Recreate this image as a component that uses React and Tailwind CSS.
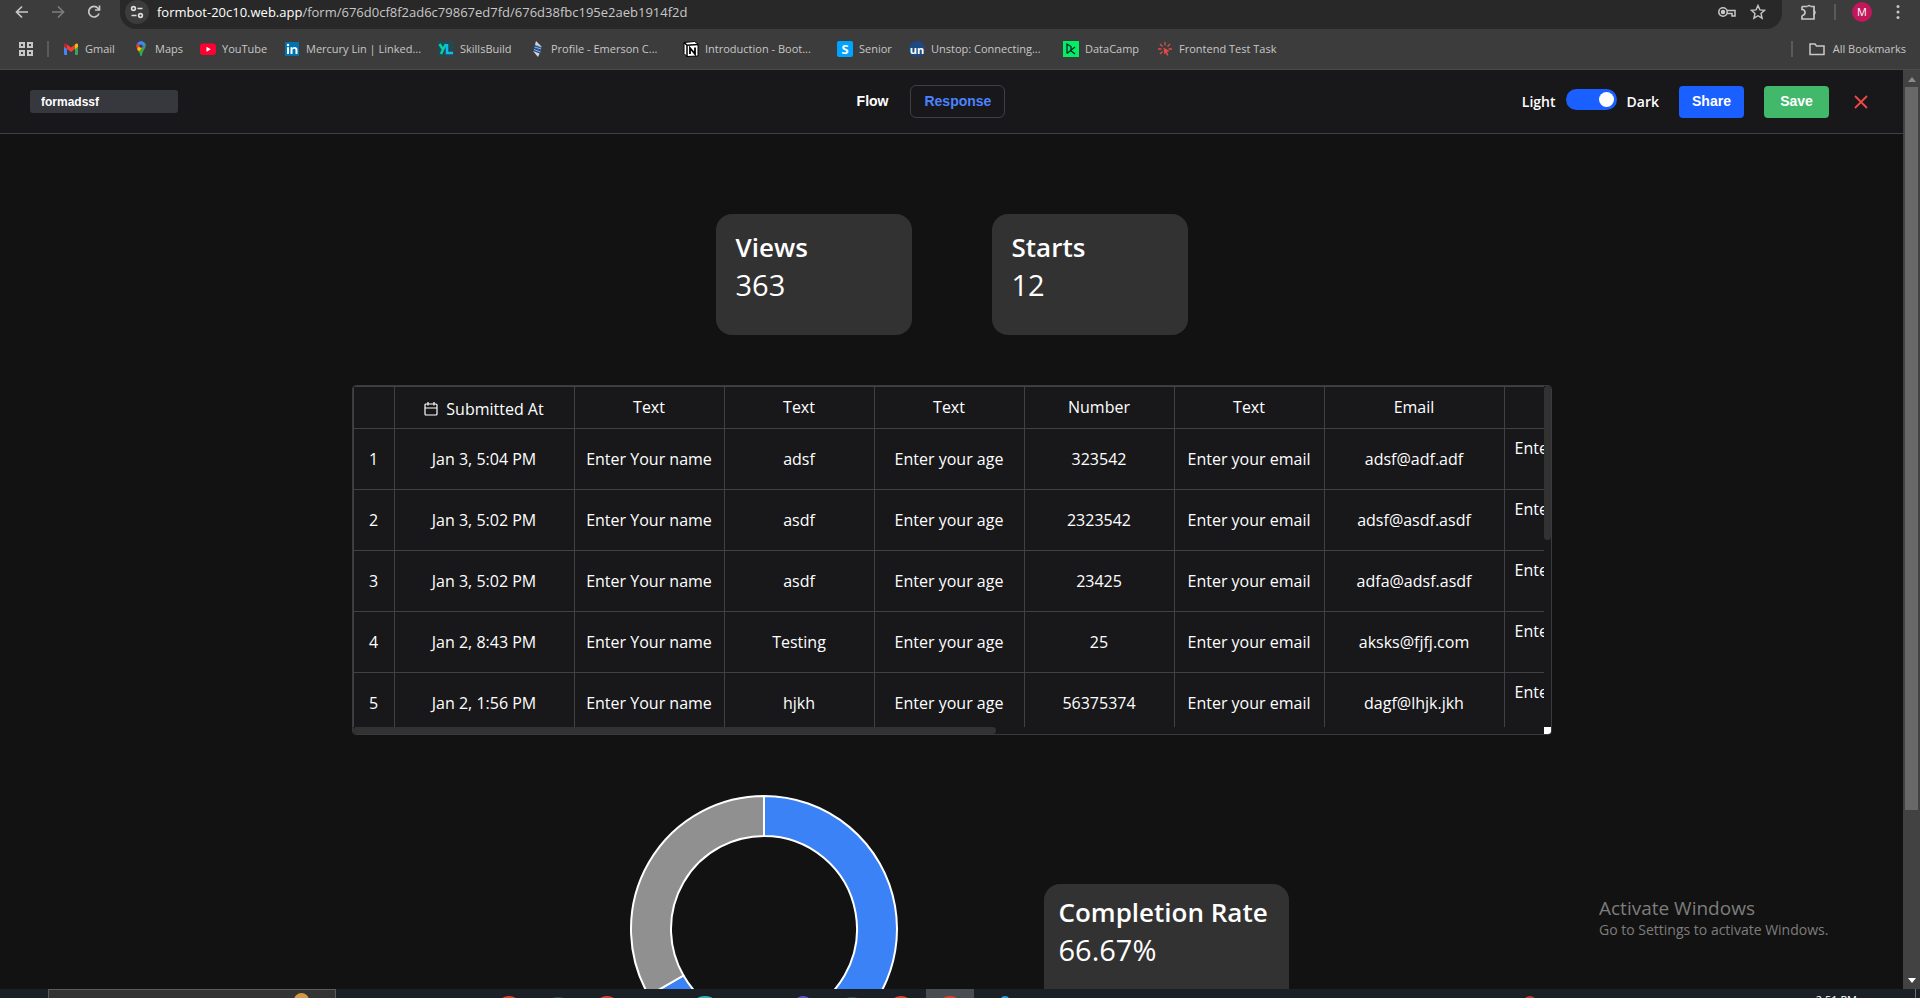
import { useState } from 'react';
import { FaYoutube } from 'react-icons/fa';

const bookmarks = [
  { name: 'Gmail', icon: 'gmail', w: 'w-[70px]' },
  { name: 'Maps', icon: 'maps', w: 'w-[67px]' },
  { name: 'YouTube', icon: 'youtube', w: 'w-[84px]' },
  { name: 'Mercury Lin | Linked...', icon: 'linkedin', w: 'w-[154px]' },
  { name: 'SkillsBuild', icon: 'skills', w: 'w-[91px]' },
  { name: 'Profile - Emerson C...', icon: 'profile', w: 'w-[154px]' },
  { name: 'Introduction - Boot...', icon: 'notion', w: 'w-[154px]' },
  { name: 'Senior', icon: 'senior', w: 'w-[72px]' },
  { name: 'Unstop: Connecting...', icon: 'unstop', w: 'w-[154px]' },
  { name: 'DataCamp', icon: 'datacamp', w: 'w-[94px]' },
  { name: 'Frontend Test Task', icon: 'frontend', w: 'w-[140px]' },
];

const columns = ['Text', 'Text', 'Text', 'Number', 'Text', 'Email'];

const rows = [
  ['Jan 3, 5:04 PM', 'adsf', '323542', 'adsf@adf.adf'],
  ['Jan 3, 5:02 PM', 'asdf', '2323542', 'adsf@asdf.asdf'],
  ['Jan 3, 5:02 PM', 'asdf', '23425', 'adfa@adsf.asdf'],
  ['Jan 2, 8:43 PM', 'Testing', '25', 'aksks@fjfj.com'],
  ['Jan 2, 1:56 PM', 'hjkh', '56375374', 'dagf@lhjk.jkh'],
];

function BookmarkIcon({ icon }) {
  switch (icon) {
    case 'gmail':
      return (
        <svg viewBox="0 0 16 16" className="size-4 shrink-0">
          <path d="M1 3.5h3V14H2a1 1 0 0 1-1-1z" fill="#4285f4" />
          <path d="M12 3.5h3V13a1 1 0 0 1-1 1h-2z" fill="#34a853" />
          <path d="M4 8V3.5L8 6.6l4-3.1V8l-4 3z" fill="#ea4335" />
          <path d="M1 4c0-1.8 1.8-2 3-.5V8L1 5.7z" fill="#c5221f" />
          <path d="M15 4c0-1.8-1.8-2-3-.5V8l3-2.3z" fill="#fbbc04" />
        </svg>
      );
    case 'maps':
      return (
        <svg viewBox="0 0 16 20" className="h-4 w-4 shrink-0">
          <path d="M3 3.5A6 6 0 0 1 10 .6L6.200 5z" fill="#1a73e8" />
          <path d="M3 3.5C5 .5 8 0 10 .6c2 .6 3.400 2 3.900 4L10 8.5 6.200 5z" fill="#4285f4" />
          <path d="M3 3.5 6.200 5.500 4 11C1.700 8 1.600 5.500 3 3.500z" fill="#ea4335" />
          <path d="M10 8.200 5.500 13.500 3 10 6.200 6z" fill="#fbbc04" />
          <path d="M13.900 4.500c.5 3.500-1.500 5.500-3.300 8.500-1.300 2.500-1.100 6-2.600 6s-1-3-2.500-5.500z" fill="#34a853" />
          <circle cx="8" cy="6.500" r="2" fill="#3c3c3c" />
        </svg>
      );
    case 'youtube':
      return (
        <svg viewBox="0 0 16 16" className="size-4 shrink-0">
          <rect x="0" y="2.500" width="16" height="11.500" rx="3" fill="#ff0033" />
          <path d="M6.500 5.800v5l4.300-2.500z" fill="#fff" />
        </svg>
      );
    case 'linkedin':
      return (
        <svg viewBox="0 0 16 16" className="size-4 shrink-0">
          <path d="M1 1h14v14H1z" fill="#0073b1" />
          <path d="M3 6.300h2V13H3zM6.500 6.300h2V13h-2zM8.500 8.500c.5-.9 3-1.200 3 .7V13h2V9c0-3.500-4-3.500-5-1.700z" fill="#fff" />
          <circle cx="4" cy="4" r="1.200" fill="#fff" />
        </svg>
      );
    case 'skills':
      return (
        <svg viewBox="0 0 16 16" className="size-4 shrink-0">
          <path d="M0 0h16v16H0z" fill="#24484d" />
          <path d="M1.500 3 5 8.500 8 3M5 8.500 3 13" fill="none" stroke="#00d3a9" strokeWidth="2.500" />
          <path d="M9 3v9h6" fill="none" stroke="#14b8f0" strokeWidth="2.500" />
        </svg>
      );
    case 'profile':
      return (
        <svg viewBox="0 0 16 16" className="size-4 shrink-0">
          <path d="m7 .5 6 5.500-3 9.500-6-6z" fill="#2b4f86" />
          <path d="M7 0 6 4l7 2zM4 10l5 6 1.500-3.500z" fill="#d5d7da" />
          <path d="M5.500 6 12 8M5 8.500l6.500 2.500M7 4l5 2" stroke="#8fb2dd" strokeWidth="1" />
        </svg>
      );
    case 'notion':
      return (
        <svg viewBox="0 0 16 16" className="size-4 shrink-0">
          <path d="M1 1.500 11.500.500 15 3v12L4 15.500l-3-3z" fill="#fff" stroke="#000" />
          <path d="M1 1.500 4 4.300 15 3.500M4 4.300V16" fill="none" stroke="#000" strokeWidth="1.500" />
          <path d="M7 13V7l5 6V6.500" fill="none" stroke="#000" strokeWidth="1.800" />
        </svg>
      );
    case 'senior':
      return (
        <span className="flex size-4 shrink-0 items-center justify-center rounded-xs bg-[#00a3ff] text-[13px] leading-none font-bold text-white">
          S
        </span>
      );
    case 'unstop':
      return (
        <span className="flex size-4 shrink-0 items-center justify-center rounded-full bg-[#1c4980] text-[11px] leading-none font-bold text-white">
          un
        </span>
      );
    case 'datacamp':
      return (
        <svg viewBox="0 0 16 16" className="size-4 shrink-0">
          <path d="M0 0h16v16H0z" fill="#03ef62" />
          <path d="M4 12.500V3l4 2.500v3.800L4 12.500M12 6 7.500 9.500l4.500 3.500" fill="none" stroke="#05192d" strokeWidth="1.200" />
        </svg>
      );
    default:
      return (
        <svg viewBox="0 0 16 16" className="size-4 shrink-0">
          <path d="M8 1v3.500M3 3l2.500 2.500M13 3l-2.500 2.500M1 8h3.500M11.500 8H15M3 13l2.500-2.500" stroke="#dd4b4b" strokeWidth="1.300" />
          <path d="m6.500 6.500 6 3.500-2.500 1 1.500 3-1.500.800L8.800 12 7.300 13.500z" fill="#dd4b4b" />
        </svg>
      );
  }
}

function BrowserBar() {
  return (
    <div className="h-[70px] shrink-0 overflow-hidden border-b border-[#4a4a4a] bg-[#3c3c3c] text-[#c7c7c7]">
      <div className="flex h-[29px] items-start">
        <div className="flex h-6 w-[120px] shrink-0 items-center gap-5 pl-[14px]">
          <button aria-label="Back">
            <svg viewBox="0 0 16 16" className="size-4" fill="none" stroke="#c7c7c7" strokeWidth="1.700">
              <path d="M14 8H3M8 2.500 2.500 8 8 13.500" />
            </svg>
          </button>
          <button aria-label="Forward">
            <svg viewBox="0 0 16 16" className="size-4" fill="none" stroke="#7d7d7d" strokeWidth="1.700">
              <path d="M2 8h11M8 2.500 13.500 8 8 13.500" />
            </svg>
          </button>
          <button aria-label="Reload">
            <svg viewBox="0 0 16 16" className="size-4" fill="none" stroke="#c7c7c7" strokeWidth="1.700">
              <path d="M13 9.500A5.300 5.300 0 1 1 12 4.200L13.500 6" />
              <path d="M13.500 1.500V6H9" />
            </svg>
          </button>
        </div>
        <div className="flex h-[29px] min-w-0 flex-1 items-start justify-between rounded-b-[16px] bg-[#282828] pr-4 pl-[5px]">
          <div className="flex h-6 items-center">
            <button aria-label="Site information" className="flex size-6 items-center justify-center rounded-full bg-[#3c3c3c]">
              <svg viewBox="0 0 16 16" className="size-4" fill="none" stroke="#dedede" strokeWidth="1.600">
                <circle cx="4.500" cy="4.500" r="1.900" />
                <path d="M8.500 4.500h5M2.500 11.500h5" />
                <circle cx="11.500" cy="11.500" r="1.900" />
              </svg>
            </button>
            <p className="ml-2 text-[13px] leading-5 whitespace-nowrap text-[#c7c7c7]">
              <span className="text-white">formbot-20c10.web.app</span>/form/676d0cf8f2ad6c79867ed7fd/676d38fbc195e2aeb1914f2d
            </p>
          </div>
          <div className="flex h-6 items-center gap-[14px]">
            <svg viewBox="0 0 18 12" className="h-3 w-[18px]" fill="none" stroke="#c7c7c7" strokeWidth="1.500">
              <circle cx="5" cy="6" r="4.200" />
              <circle cx="5" cy="6" r="1.500" fill="#c7c7c7" />
              <path d="M9 4.500h8V10h-3V7.500H9" />
            </svg>
            <svg viewBox="0 0 16 16" className="size-4" fill="none" stroke="#c7c7c7" strokeWidth="1.400">
              <path d="m8 1.500 1.900 4.400 4.700.4L11 9.500l1.100 4.700L8 11.700l-4.100 2.500L5 9.500 1.400 6.300l4.700-.4z" />
            </svg>
          </div>
        </div>
        <div className="flex h-6 w-[138px] shrink-0 items-center pl-[18px]">
          <svg viewBox="0 0 18 18" className="size-[18px]" fill="none" stroke="#c7c7c7" strokeWidth="1.700">
            <path d="M2 3.500h5.500M10.500 3.500H14V8M14 11v5H2v-3.500M2 3.500v3a2.500 2.500 0 0 1 0 6" />
            <path d="M7 3.500a2 1.800 0 0 1 4 0zM14 7.500a1.800 2 0 0 1 0 4z" fill="#c7c7c7" stroke="none" />
            <path d="M14 7v5" />
          </svg>
          <span className="ml-4 h-4 w-[2px] bg-[#5a5a5a]" />
          <span className="ml-4 flex size-5 items-center justify-center rounded-full bg-[#c2185b] text-[11px] text-white">M</span>
          <svg viewBox="0 0 4 16" className="ml-6 h-4 w-1" fill="#c7c7c7">
            <circle cx="2" cy="2.500" r="1.500" />
            <circle cx="2" cy="8" r="1.500" />
            <circle cx="2" cy="13.500" r="1.500" />
          </svg>
        </div>
      </div>
      <div className="flex h-10 items-center pr-[14px] pl-[19px] text-[11px]">
        <svg viewBox="0 0 14 14" className="size-[14px] shrink-0" fill="none" stroke="#c7c7c7" strokeWidth="2">
          <path d="M1 1h4v4H1zM9 1h4v4H9zM1 9h4v4H1zM9 9h4v4H9z" />
        </svg>
        <span className="mx-[14px] h-4 w-[2px] bg-[#5a5a5a]" />
        <nav className="flex flex-1">
          {bookmarks.map((b) => (
            <a href="#" key={b.name} className={`${b.w} flex h-5 shrink-0 items-center gap-[6px] whitespace-nowrap`}>
              <BookmarkIcon icon={b.icon} />
              {b.name}
            </a>
          ))}
        </nav>
        <span className="mr-4 h-4 w-[2px] bg-[#5a5a5a]" />
        <a href="#" className="flex items-center gap-2 whitespace-nowrap">
          <svg viewBox="0 0 16 14" className="h-[14px] w-4" fill="none" stroke="#c7c7c7" strokeWidth="1.500">
            <path d="M1 12V2h5l1.500 2H15v8.500H1z" />
          </svg>
          All Bookmarks
        </a>
      </div>
    </div>
  );
}

function Header({ dark, setDark }) {
  const [formName, setFormName] = useState('formadssf');

  return (
    <header className="grid h-16 shrink-0 grid-cols-3 items-center border-b border-[#3f3f46] bg-[#18181b] pr-[35px] pl-[30px] text-white">
      <div className="flex">
        <input
          aria-label="Form name"
          value={formName}
          onChange={(e) => setFormName(e.target.value)}
          className="h-[23px] w-[148px] rounded-[3px] bg-[#37373e] px-[11px] font-['Liberation_Sans',Arial,sans-serif] text-[12px] font-bold"
        />
      </div>
      <div className="flex items-center justify-center gap-[22px] pr-9 font-['Liberation_Sans',Arial,sans-serif] text-[14px] font-bold">
        <button>Flow</button>
        <button className="h-[33px] rounded-md border border-[#3f3f46] px-[13px] text-[#4b83ff]">Response</button>
      </div>
      <div className="flex items-center justify-end gap-5">
        <div className="flex items-center gap-[10px] text-[14px] font-semibold">
          <span>Light</span>
          <label className="mb-1 flex h-[21px] w-[51px] cursor-pointer items-center justify-end rounded-full bg-[#1a5fff] px-[3px]">
            <input type="checkbox" aria-label="Dark mode" className="sr-only" checked={dark} onChange={(e) => setDark(e.target.checked)} />
            <span className="size-[15px] rounded-full bg-white" />
          </label>
          <span>Dark</span>
        </div>
        <button className="h-8 w-[65px] rounded-sm bg-[#1a5fff] font-['Liberation_Sans',Arial,sans-serif] text-[14px] font-bold">Share</button>
        <button className="h-8 w-[65px] rounded-sm bg-[#42b86b] font-['Liberation_Sans',Arial,sans-serif] text-[14px] font-bold">Save</button>
        <button aria-label="Close" className="ml-[5px]">
          <svg viewBox="0 0 14 14" className="size-[14px]" stroke="#f04848" strokeWidth="1.800" fill="none">
            <path d="m1 1 12 12M13 1 1 13" />
          </svg>
        </button>
      </div>
    </header>
  );
}

function StatCard({ title, value, className }) {
  return (
    <div className={`${className} h-[121px] rounded-2xl bg-[#323232] text-white`}>
      <h3 className="text-[26px] leading-[38px] font-semibold whitespace-nowrap">{title}</h3>
      <p className="text-[29px] leading-[38px]">{value}</p>
    </div>
  );
}

function ResponseTable() {
  return (
    <div className="mt-[50px] grid h-[350px] w-full max-w-[1200px] shrink-0 grid-cols-[minmax(0,1fr)_7px] grid-rows-[minmax(0,1fr)_7px] overflow-hidden rounded-sm border border-[#3a3a3c] bg-[#18181b] text-white">
      <div className="overflow-hidden">
        <table className="w-[1352px] table-fixed border-collapse text-center text-[16px]">
          <colgroup>
            <col className="w-[41px]" />
            <col className="w-[180px]" />
            <col className="w-[150px]" />
            <col className="w-[150px]" />
            <col className="w-[150px]" />
            <col className="w-[150px]" />
            <col className="w-[150px]" />
            <col className="w-[180px]" />
            <col className="w-[201px]" />
          </colgroup>
          <thead>
            <tr className="h-[42px] *:border *:border-[#414144] *:pb-[2px] *:font-medium">
              <th></th>
              <th>
                <span className="flex items-center justify-center gap-2 pt-1">
                  <svg viewBox="0 0 14 14" className="size-[14px]" fill="none" stroke="#fff" strokeWidth="1.200">
                    <rect x="1" y="2" width="12" height="11" rx="1" />
                    <path d="M1 6h12M4 0v3.500M10 0v3.500" />
                  </svg>
                  Submitted At
                </span>
              </th>
              {columns.map((c, i) => (
                <th key={i}>{c}</th>
              ))}
              <th></th>
            </tr>
          </thead>
          <tbody>
            {rows.map(([date, name, age, email], i) => (
              <tr key={i} className="h-[61px] *:border *:border-[#414144]">
                <td>{i + 1}</td>
                <td>{date}</td>
                <td>Enter Your name</td>
                <td>{name}</td>
                <td>Enter your age</td>
                <td>{age}</td>
                <td>Enter your email</td>
                <td>{email}</td>
                <td className="px-[10px] pb-[22px] text-left whitespace-nowrap">Enter your</td>
              </tr>
            ))}
          </tbody>
        </table>
      </div>
      <div>
        <div className="h-[154px] rounded-full bg-[#323232]" />
      </div>
      <div>
        <div className="h-full w-[54%] rounded-full bg-[#323232]" />
      </div>
      <div className="bg-white" />
    </div>
  );
}

function Donut() {
  return (
    <svg viewBox="0 0 270 270" className="size-[270px] shrink-0" stroke="#fff" strokeWidth="2">
      <path d="M135 2A133 133 0 1 1 19.820 201.500L54.460 181.500A93 93 0 1 0 135 42z" fill="#3b82f6" />
      <path d="M135 2A133 133 0 0 0 19.820 201.500L54.460 181.500A93 93 0 0 1 135 42z" fill="#909090" />
    </svg>
  );
}

function PageScrollbar() {
  return (
    <div className="flex w-[17px] shrink-0 flex-col items-center bg-[#424242] py-[6px]">
      <svg viewBox="0 0 8 5" className="mt-[1px] mb-[5px] h-[5px] w-2" fill="#8a8a8a">
        <path d="M4 0 8 5H0z" />
      </svg>
      <div className="min-h-0 w-[13px] flex-[725] bg-[#686868]" />
      <div className="min-h-0 flex-[157]" />
      <svg viewBox="0 0 8 5" className="mt-3 h-[5px] w-2" fill="#fff">
        <path d="M0 0h8L4 5z" />
      </svg>
    </div>
  );
}

function Taskbar() {
  return (
    <div className="flex h-[9px] shrink-0 overflow-hidden bg-[#1b2027]">
      <div className="ml-12 flex w-[288px] shrink-0 justify-end border border-b-0 border-[#5c5c5c] bg-[#333333] pr-[26px]">
        <span className="mt-[3px] size-[15px] rounded-full bg-[#d39a45]" />
      </div>
      <svg viewBox="336 0 1200 9" className="h-[9px] w-[1200px] shrink-0">
        <path d="M926 0h48v9h-48z" fill="#494d51" />
        <ellipse cx="509" cy="10" rx="7" ry="3" fill="#e5402f" />
        <ellipse cx="558" cy="10" rx="6" ry="2" fill="#2c5a44" />
        <ellipse cx="607" cy="10" rx="7" ry="3" fill="#e5402f" />
        <ellipse cx="705" cy="10" rx="8" ry="3" fill="#2fb5bd" />
        <ellipse cx="803" cy="10" rx="6" ry="3" fill="#5a55c8" />
        <ellipse cx="852" cy="10" rx="6" ry="2" fill="#2c5a44" />
        <ellipse cx="901" cy="10" rx="7" ry="3" fill="#e5402f" />
        <ellipse cx="950" cy="10" rx="7" ry="3" fill="#e5402f" />
        <ellipse cx="1005" cy="10" rx="4" ry="3" fill="#2a9fd8" />
        <ellipse cx="1530" cy="10" rx="5" ry="3" fill="#c0392b" />
      </svg>
      <div className="flex flex-1 justify-end">
        <span className="mt-[3px] mr-[58px] text-[11px] leading-4 text-white">2:51 PM</span>
        <span className="mr-1 w-px bg-[#6d7075]" />
      </div>
    </div>
  );
}

export default function App() {
  const [dark, setDark] = useState(true);

  return (
    <div className="flex h-screen flex-col overflow-hidden bg-[#121212] font-['Open_Sans','Noto_Sans',sans-serif]">
      <BrowserBar />
      <div className="relative flex min-h-0 flex-1">
        <div className="flex min-w-0 flex-1 flex-col overflow-hidden">
          <Header dark={dark} setDark={setDark} />
          <main className="flex min-h-0 flex-1 flex-col items-center overflow-hidden pt-20">
            <div className="flex gap-20">
              <StatCard title="Views" value="363" className="w-[196px] px-5 py-[14px]" />
              <StatCard title="Starts" value="12" className="w-[196px] px-5 py-[14px]" />
            </div>
            <ResponseTable />
            <div className="mt-[59px] flex shrink-0 items-start gap-[145px] pl-[14px]">
              <Donut />
              <StatCard title="Completion Rate" value="66.67%" className="mt-[90px] w-[245px] px-[15px] py-[9px]" />
            </div>
          </main>
        </div>
        <div className="pointer-events-none absolute right-[85px] bottom-[49px] w-[236px] whitespace-nowrap text-[#7d7d7d]">
          <p className="text-[19px] leading-6">Activate Windows</p>
          <p className="text-[14px] leading-5">Go to Settings to activate Windows.</p>
        </div>
        <PageScrollbar />
      </div>
      <Taskbar />
    </div>
  );
}
